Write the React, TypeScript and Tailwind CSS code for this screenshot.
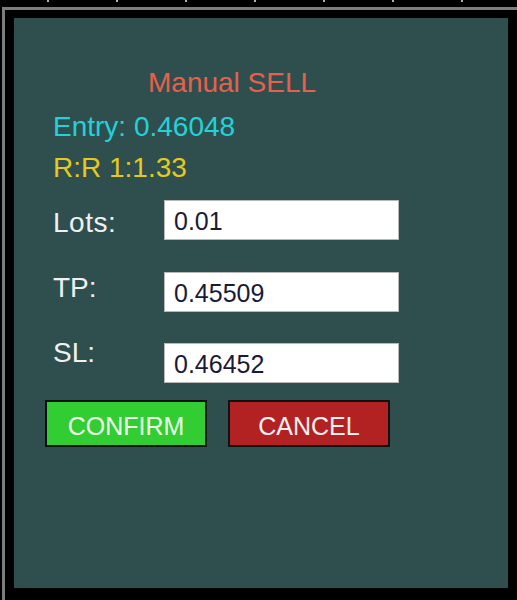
import React from "react";

const font = { fontFamily: '"Liberation Sans", Arial, sans-serif' };

export default function App() {
  const ticks = [0, 1, 2, 3, 4, 5, 6];
  return (
    <div
      className="w-[517px] h-[600px] bg-black flex flex-col overflow-hidden"
      style={font}
    >
      <div className="h-[7px] flex pl-[47px] gap-[67px]">
        {ticks.map((t) => (
          <div key={t} className="w-[2px] h-[2px] bg-[#b0b0b0]" />
        ))}
      </div>
      <div className="ml-[2px] flex-1 border-l-[3px] border-t-[3px] border-[#7d7d7d] pl-[9px] pt-[8px]">
        <div className="w-[494px] h-[570px] bg-[#2f4f4f] flex flex-col pt-[49px]">
          <div className="pl-[134px] text-[28px] leading-[32px] text-[#e8604b]">
            Manual SELL
          </div>
          <div className="pl-[39px] mt-[12px] text-[28px] leading-[32px] text-[#22d2d9]">
            Entry: 0.46048
          </div>
          <div className="pl-[39px] mt-[9px] text-[28px] leading-[32px] text-[#e4c91e]">
            R:R 1:1.33
          </div>
          <div className="flex pl-[39px] mt-[16px]">
            <div className="w-[111px] flex flex-col pt-[7px] text-[28px] leading-[32px] text-[#f0f0f0]">
              <div className="tracking-[0.5px]">Lots:</div>
              <div className="mt-[33px]">TP:</div>
              <div className="mt-[33px]">SL:</div>
            </div>
            <div className="flex flex-col">
              {["0.01", "0.45509", "0.46452"].map((v, i) => (
                <div
                  key={v}
                  className={
                    "w-[235px] h-[40px] bg-white border border-[#b8b8b8] pl-[9px] pt-[6px] text-[25px] leading-[28px] text-[#1a1a36] " +
                    (i === 1 ? "mt-[32px]" : i === 2 ? "mt-[31px]" : "")
                  }
                >
                  {v}
                </div>
              ))}
            </div>
          </div>
          <div className="flex pl-[31px] mt-[17px] gap-[21px]">
            <div className="w-[162px] h-[47px] bg-[#32cd32] border-2 border-[#111] flex items-center justify-center pt-[5px] text-[25px] leading-[28px] text-[#ecffe6]">
              CONFIRM
            </div>
            <div className="w-[162px] h-[47px] bg-[#b22222] border-2 border-[#111] flex items-center justify-center pt-[5px] text-[25px] leading-[28px] text-[#fdf0f0]">
              CANCEL
            </div>
          </div>
        </div>
      </div>
    </div>
  );
}
